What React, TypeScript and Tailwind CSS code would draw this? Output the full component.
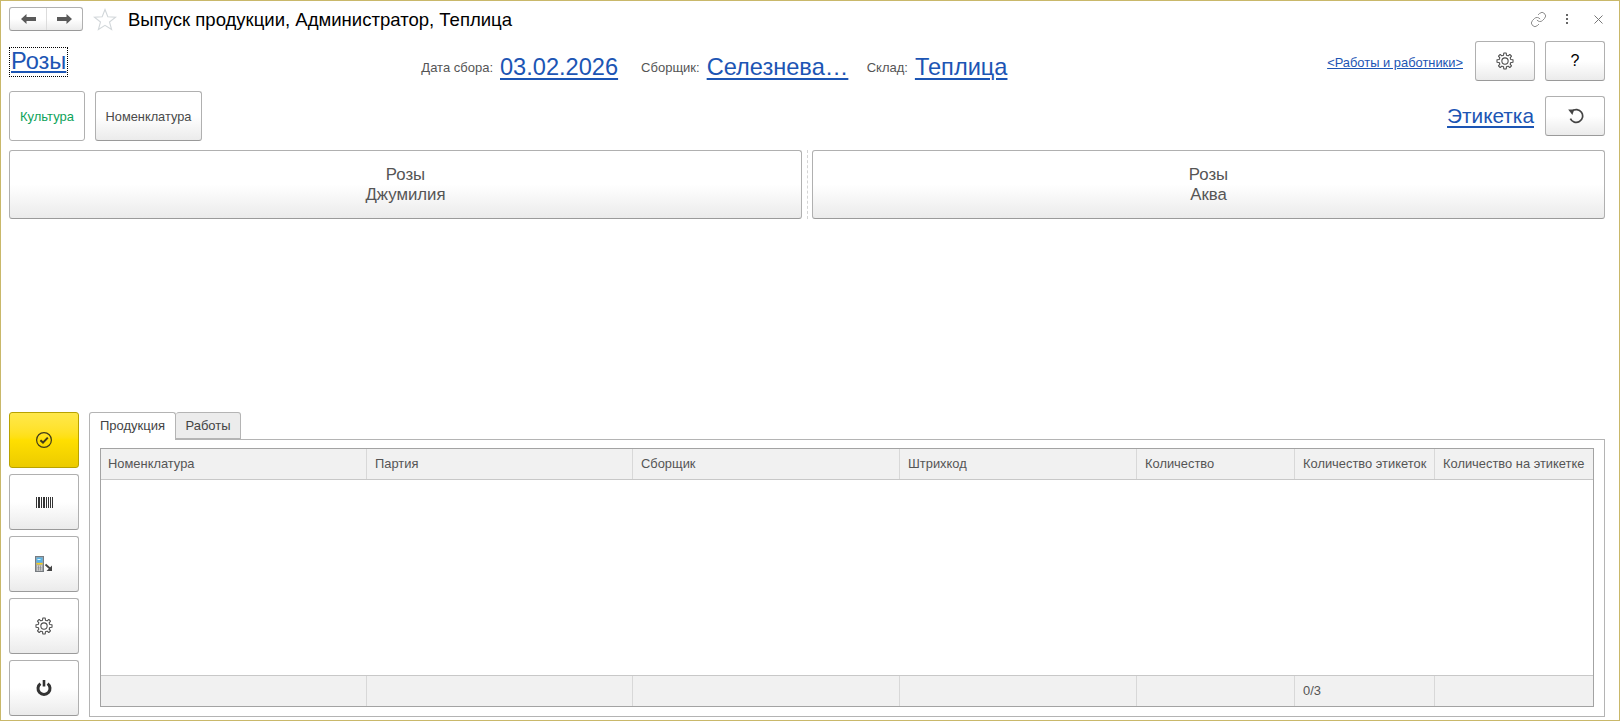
import React from 'react';
import { Link } from 'lucide-react';

const gearPath = (() => {
    const teeth = 8;
    const pts: string[] = [];
    for (let i = 0; i < teeth; i++) {
        const a = (i / teeth) * Math.PI * 2 - Math.PI / 2;
        const step = Math.PI / teeth;
        const add = (ang: number, r: number) =>
            pts.push(`${(12 + Math.cos(ang) * r).toFixed(2)} ${(12 + Math.sin(ang) * r).toFixed(2)}`);
        add(a - step * 0.38, 10.8);
        add(a + step * 0.38, 10.8);
        add(a + step * 0.62, 8);
        add(a + step * 1.38, 8);
    }
    return 'M' + pts.join('L') + 'Z';
})();

const Gear = () => (
    <svg width="18" height="18" viewBox="0 0 24 24" fill="none" stroke="#4a4a4a" strokeWidth="1.4" strokeLinejoin="round">
        <path d={gearPath} />
        <circle cx="12" cy="12" r="4.2" />
    </svg>
);

const CheckCircle = () => (
    <svg width="18" height="18" viewBox="0 0 18 18" fill="none" stroke="#3f3a1a">
        <circle cx="9" cy="9" r="7.4" strokeWidth="1.2" />
        <path d="M5.4 9.2 8 11.6 12.8 6.6" strokeWidth="2" />
    </svg>
);

const Barcode = () => (
    <svg width="17" height="11" viewBox="0 0 17 11" fill="#333">
        <rect x="0" width="1" height="11" />
        <rect x="2" width="2" height="11" />
        <rect x="5" width="1" height="11" />
        <rect x="7" width="2" height="11" />
        <rect x="10" width="1" height="11" />
        <rect x="12" width="1" height="11" />
        <rect x="14" width="1" height="11" />
        <rect x="16" width="1" height="11" />
    </svg>
);

const Terminal = () => (
    <svg width="18" height="16" viewBox="0 0 18 16">
        <rect x="0.5" y="0.5" width="8" height="15" fill="#a0a5a8" stroke="#777c80" />
        <rect x="1.5" y="1.5" width="6" height="5" fill="#58b4e6" />
        <rect x="2.5" y="3" width="3" height="1" fill="#d8f0fa" />
        <rect x="1.5" y="7" width="6" height="1.5" fill="#f5cf1e" />
        <rect x="2" y="9.5" width="5" height="5" fill="#e8e8e8" />
        <path d="M3.5 9.5v5M5.5 9.5v5M2 11.2h5M2 13h5" stroke="#777" strokeWidth="0.6" />
        <path d="M10.5 8.5 15.5 13" stroke="#444" strokeWidth="1.8" fill="none" />
        <path d="M17 9.5V15h-5.5Z" fill="#444" />
    </svg>
);

const Power = () => (
    <svg width="16" height="16" viewBox="0 0 16 16" fill="none" stroke="#333" strokeWidth="3">
        <path d="M4.4 3.6a6 6 0 1 0 7.2 0" />
        <path d="M8 0v6.5" strokeWidth="2.6" />
    </svg>
);

const Refresh = () => (
    <svg width="17" height="16" viewBox="0 0 17 16" fill="none">
        <path d="M5 3.2a6.4 6.4 0 1 1-1.6 7.4" stroke="#444" strokeWidth="1.7" />
        <path d="M1.2 1.4 7.2 1.6 5.4 7Z" fill="#444" />
    </svg>
);

const Star = () => (
    <svg width="24" height="23" viewBox="0 0 24 23" fill="#fff" stroke="#d2d7da" strokeWidth="1.1">
        <path d="M12 1.5 14.8 8.8 22.6 9.2 16.5 14 18.6 21.5 12 17.3 5.4 21.5 7.5 14 1.4 9.2 9.2 8.8Z" />
    </svg>
);

const Arrow = ({ right }: { right?: boolean }) => (
    <svg width="15" height="10" viewBox="0 0 15 10" fill="#5a5a5a" className={right ? 'rotate-180' : ''}>
        <path d="M0 5 5.5 0V3H15V7H5.5V10Z" />
    </svg>
);

const btn = 'flex items-center justify-center rounded-[3px] border border-[#b0b0b0] border-b-[#9a9a9a] bg-gradient-to-b from-white from-50% to-[#ebebeb] text-[#4a4a4a]';

const columns = [
    { title: 'Номенклатура', total: '' },
    { title: 'Партия', total: '' },
    { title: 'Сборщик', total: '' },
    { title: 'Штрихкод', total: '' },
    { title: 'Количество', total: '' },
    { title: 'Количество этикеток', total: '0/3' },
    { title: 'Количество на этикетке', total: '' },
];

const gridCols = 'grid grid-cols-[266px_266px_267px_237px_158px_140px_1fr]';

const sideButtons = [<Barcode />, <Terminal />, <Gear />, <Power />];

const Label = ({ children }: { children: React.ReactNode }) => (
    <span className="text-[13px] text-[#555] mt-[2px]">{children}</span>
);

const BigLink = ({ children, className = '' }: { children: React.ReactNode; className?: string }) => (
    <a className={`text-[23.6px] leading-[28px] text-[#1c55b4] underline decoration-2 underline-offset-[3px] ${className}`}>{children}</a>
);

export default function App() {
    return (
        <div className="w-[1620px] h-[721px] border border-[#c9b86a] bg-white flex flex-col overflow-hidden pl-2 pr-[14px] font-['Liberation_Sans',Arial,sans-serif]">

            {/* Title bar */}
            <div className="flex items-center h-[24px] mt-[6px] shrink-0">
                <div className="w-[74px] h-[24px] flex rounded-[3px] border border-[#b0b0b0] border-b-[#9a9a9a] bg-gradient-to-b from-white from-50% to-[#ebebeb]">
                    <div className="w-[37px] flex items-center justify-center border-r border-[#dcdcdc]"><Arrow /></div>
                    <div className="flex-1 flex items-center justify-center"><Arrow right /></div>
                </div>
                <div className="ml-[10px]"><Star /></div>
                <h1 className="ml-[11px] mt-[2px] text-[18.55px] text-black">Выпуск продукции, Администратор, Теплица</h1>
                <div className="ml-auto flex items-center text-[#7a7a7a]">
                    <Link size={17} strokeWidth={1.2} className="mr-[19px]" />
                    <div className="flex flex-col gap-[1.5px] mr-[26px]">
                        <span className="w-[2.5px] h-[2.5px] bg-[#666]" />
                        <span className="w-[2.5px] h-[2.5px] bg-[#666]" />
                        <span className="w-[2.5px] h-[2.5px] bg-[#666]" />
                    </div>
                    <svg width="9" height="9" viewBox="0 0 9 9" stroke="#777" strokeWidth="1" className="mr-[2px]">
                        <path d="M0.5 0.5 8.5 8.5M8.5 0.5 0.5 8.5" />
                    </svg>
                </div>
            </div>

            {/* Fields row */}
            <div className="flex h-[40px] mt-[10px] shrink-0">
                <div className="ml-px self-start mt-[7px] h-[28px] px-px outline-1 outline-dotted outline-black">
                    <a className="text-[23.6px] leading-[26px] text-[#1c55b4] underline decoration-2 underline-offset-[2px]">Розы</a>
                </div>
                <div className="ml-[354px] flex items-center gap-[7px] mt-[6px] h-[40px]">
                    <Label>Дата сбора:</Label>
                    <BigLink>03.02.2026</BigLink>
                    <span className="w-[9px]" />
                    <Label>Сборщик:</Label>
                    <BigLink className="w-[142px] whitespace-nowrap">Селезнева…</BigLink>
                    <span className="w-[4px]" />
                    <Label>Склад:</Label>
                    <BigLink>Теплица</BigLink>
                </div>
                <a className="ml-auto self-center mt-[3px] text-[12.9px] text-[#1c55b4] underline">&lt;Работы и работники&gt;</a>
                <button className={`${btn} w-[60px] h-[40px] ml-[12px]`}><Gear /></button>
                <button className={`${btn} w-[60px] h-[40px] ml-[10px] text-black text-[16px]`}>?</button>
            </div>

            {/* Switches row */}
            <div className="flex items-center h-[50px] mt-[10px] shrink-0">
                <button className="w-[76px] h-[50px] pt-[2px] rounded-[3px] border border-[#b0b0b0] bg-white text-[13px] text-[#0ea35a]">Культура</button>
                <button className={`${btn} w-[107px] h-[50px] ml-[10px] pt-[2px] text-[12.8px] from-[#f8f8f8] from-0% to-[#e4e4e4]`}>Номенклатура</button>
                <a className="ml-auto text-[20.8px] text-[#1c55b4] underline decoration-2 underline-offset-[3px]">Этикетка</a>
                <button className={`${btn} w-[60px] h-[40px] ml-[11px]`}><Refresh /></button>
            </div>

            {/* Product buttons */}
            <div className="flex h-[69px] mt-[9px] shrink-0">
                <button className={`${btn} flex-col flex-1 text-[16.8px] leading-[20px] text-[#555]`}>
                    <span>Розы</span>
                    <span>Джумилия</span>
                </button>
                <div className="w-[10px] flex justify-center shrink-0">
                    <div className="h-full border-l border-dashed border-[#d4d4d4]" />
                </div>
                <button className={`${btn} flex-col flex-1 text-[16.8px] leading-[20px] text-[#555]`}>
                    <span>Розы</span>
                    <span>Аква</span>
                </button>
            </div>

            {/* Lower part */}
            <div className="flex mt-auto mb-[3px] h-[305px] shrink-0">
                <div className="w-[70px] flex flex-col gap-[6px] shrink-0 h-[304px]">
                    <button className="h-[56px] flex items-center justify-center rounded-[3px] border border-[#b8a200] bg-gradient-to-b from-[#ffe84a] via-[#ffdf00] to-[#eccb00]">
                        <CheckCircle />
                    </button>
                    {sideButtons.map((icon, i) => (
                        <button key={i} className={`${btn} h-[56px]`}>{icon}</button>
                    ))}
                </div>

                <div className="ml-[10px] flex-1 flex flex-col">
                    {/* Tabs */}
                    <div className="flex h-[28px] shrink-0 text-[13px] relative z-10">
                        <div className="w-[87px] h-[28px] pb-[2px] flex items-center justify-center rounded-t-[3px] border border-b-0 border-[#b4b4b4] bg-white text-[#444]">Продукция</div>
                        <div className="w-[65px] h-[27px] flex items-center justify-center rounded-t-[3px] border border-l-0 border-[#b4b4b4] bg-[#ececec] text-[#444]">Работы</div>
                    </div>
                    {/* Tab page */}
                    <div className="flex-1 -mt-px border border-[#b4b4b4] px-[10px] pt-[8px] pb-[9px] flex">
                        <div className="flex-1 flex flex-col border border-[#a3a3a3] text-[12.9px] text-[#555]">
                            <div className={`${gridCols} h-[31px] bg-[#f1f1f1] border-b border-[#c8c8c8]`}>
                                {columns.map((c) => (
                                    <div key={c.title} className="flex items-center pl-[8px] first:pl-[7px] whitespace-nowrap border-r border-[#d8d8d8] last:border-r-0">{c.title}</div>
                                ))}
                            </div>
                            <div className="flex-1 bg-white" />
                            <div className={`${gridCols} h-[31px] bg-[#f1f1f1] border-t border-[#c8c8c8]`}>
                                {columns.map((c) => (
                                    <div key={c.title} className="flex items-center pl-[8px] border-r border-[#d8d8d8] last:border-r-0">{c.total}</div>
                                ))}
                            </div>
                        </div>
                    </div>
                </div>
            </div>
        </div>
    );
}
